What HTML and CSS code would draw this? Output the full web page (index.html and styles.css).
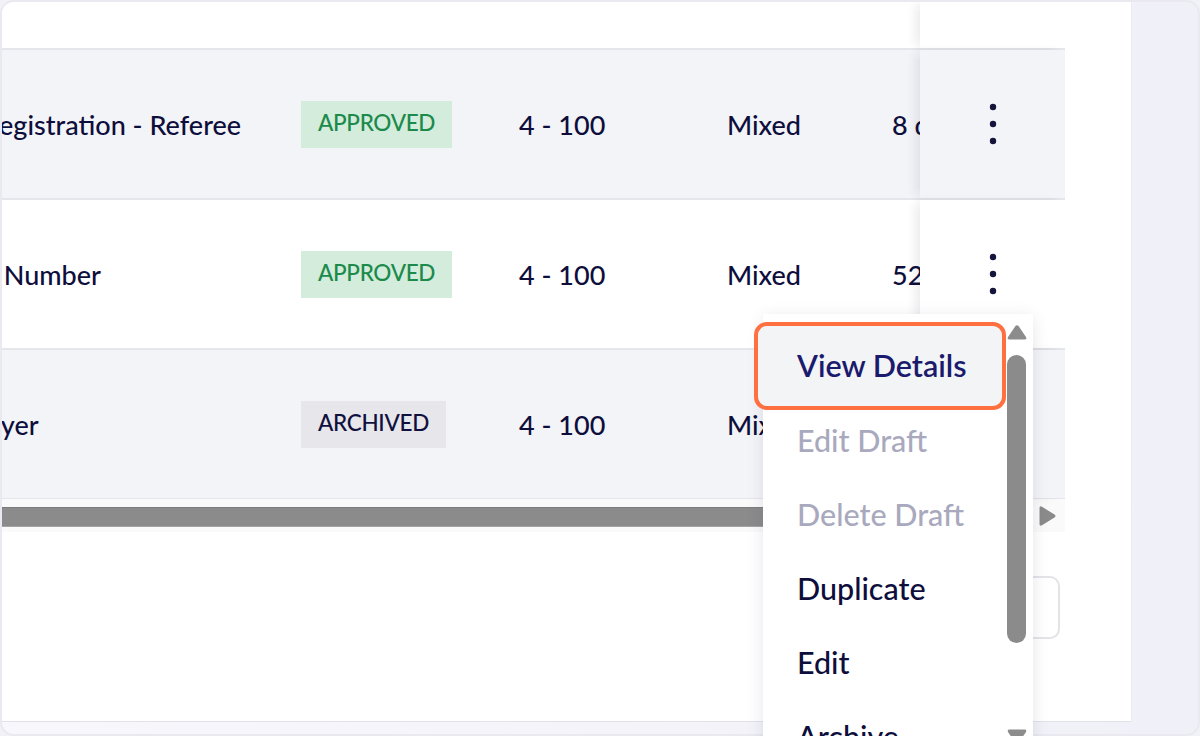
FILE: index.html
```html
<!DOCTYPE html>
<html lang="en">
<head>
<meta charset="utf-8">
<title>Forms</title>
<link rel="stylesheet" href="styles.css">
</head>
<body>
<div class="frame">
  <div class="card">
    <div class="table">
      <div class="row head">
        <div class="cells"></div>
        <div class="actions"></div>
      </div>
      <div class="row alt">
        <div class="cells">
          <div class="cell name">Player Registration - Referee</div>
          <div class="cell status"><span class="badge approved">APPROVED</span></div>
          <div class="cell range">4 - 100</div>
          <div class="cell type">Mixed</div>
          <div class="cell updated">8 days ago</div>
        </div>
        <div class="actions">
          <svg class="kebab" width="8" height="42" viewBox="0 0 8 42"><circle cx="4" cy="4" r="3.2"/><circle cx="4" cy="21" r="3.2"/><circle cx="4" cy="38" r="3.2"/></svg>
        </div>
      </div>
      <div class="row">
        <div class="cells">
          <div class="cell name">Contact Number</div>
          <div class="cell status"><span class="badge approved">APPROVED</span></div>
          <div class="cell range">4 - 100</div>
          <div class="cell type">Mixed</div>
          <div class="cell updated">52 days ago</div>
        </div>
        <div class="actions">
          <svg class="kebab" width="8" height="42" viewBox="0 0 8 42"><circle cx="4" cy="4" r="3.2"/><circle cx="4" cy="21" r="3.2"/><circle cx="4" cy="38" r="3.2"/></svg>
        </div>
      </div>
      <div class="row alt">
        <div class="cells">
          <div class="cell name">New Player</div>
          <div class="cell status"><span class="badge archived">ARCHIVED</span></div>
          <div class="cell range">4 - 100</div>
          <div class="cell type">Mixed</div>
          <div class="cell updated">60 days ago</div>
        </div>
        <div class="actions">
          <svg class="kebab" width="8" height="42" viewBox="0 0 8 42"><circle cx="4" cy="4" r="3.2"/><circle cx="4" cy="21" r="3.2"/><circle cx="4" cy="38" r="3.2"/></svg>
        </div>
      </div>
      <div class="hscroll">
        <div class="hthumb"></div>
        <svg class="harrow" width="20" height="22" viewBox="0 0 20 22"><path d="M2.5 3 Q2.5 0.5 5 1.8 L17.5 9.6 Q19.5 11 17.5 12.4 L5 20.2 Q2.5 21.5 2.5 19 Z"/></svg>
      </div>
    </div>
    <div class="pager">
      <div class="page-size">10 / page</div>
    </div>
  </div>
  <div class="side"></div>
</div>

<div class="menu">
  <ul class="menu-items">
    <li class="item current">View Details</li>
    <li class="item disabled">Edit Draft</li>
    <li class="item disabled">Delete Draft</li>
    <li class="item">Duplicate</li>
    <li class="item">Edit</li>
    <li class="item">Archive</li>
  </ul>
  <div class="menu-scroll">
    <svg class="varrow" width="20" height="15" viewBox="0 0 20 15"><path d="M8.3 1.2 Q10 -0.6 11.7 1.2 L19 12 Q20 14.5 17.5 14.5 L2.5 14.5 Q0 14.5 1 12 Z"/></svg>
    <div class="vthumb"></div>
    <svg class="varrow down" width="20" height="15" viewBox="0 0 20 15"><path d="M8.3 13.8 Q10 15.6 11.7 13.8 L19 3 Q20 0.5 17.5 0.5 L2.5 0.5 Q0 0.5 1 3 Z"/></svg>
  </div>
</div>
</body>
</html>
```

FILE: styles.css
```css
* { box-sizing: border-box; }

html, body {
  margin: 0;
  padding: 0;
  width: 1200px;
  height: 736px;
  overflow: hidden;
  background: #f1f1f7;
  font-family: Lato, "Noto Sans", sans-serif;
  color: #0e0e3c;
}

.frame {
  width: 1200px;
  height: 736px;
  border: 2px solid #e9e9ef;
  border-radius: 14px;
  overflow: hidden;
  display: flex;
  align-items: flex-start;
  background: linear-gradient(90deg, #f7f7fc 0%, #f3f3f9 60%, #f0f0f8 100%);
}

.card {
  width: 1130px;
  height: 720px;
  flex: none;
  background: #ffffff;
  border-bottom: 1px solid #e2e2ea;
  border-right: 1px solid #ebebf2;
  padding-right: 67px;
}

.side { flex: 1; }

.table {
  width: 1063px;
}

.row {
  display: flex;
  height: 150px;
  border-top: 2px solid #e5e6eb;
  background: #ffffff;
}

.row.head {
  height: 46px;
  border-top: none;
}

.row.alt { background: #f3f4f7; }

.cells {
  flex: 1;
  min-width: 0;
  overflow: hidden;
  display: flex;
  align-items: center;
  font-size: 27px;
  font-weight: 500;
  white-space: nowrap;
}

.cell { flex: none; }
.cell.name { width: 398px; margin-left: -99px; }
.cell.status { width: 218px; }
.cell.range { width: 208px; }
.cell.type { width: 165px; }
.cell.updated { width: 200px; }

.badge {
  display: inline-flex;
  align-items: center;
  height: 47px;
  padding: 0 17px 3px;
  font-size: 22.5px;
  font-weight: 500;
  letter-spacing: -0.3px;
}

.badge.approved { background: #d3ecdc; color: #1b8a4a; }
.badge.archived { background: #e6e6eb; color: #10103e; }

.actions {
  position: relative;
  z-index: 1;
  flex: none;
  width: 145px;
  display: flex;
  align-items: center;
  justify-content: center;
  background: inherit;
  box-shadow: -7px 0 10px -3px rgba(20, 20, 50, 0.09);
}

.kebab { fill: #14143c; }

.hscroll {
  height: 34px;
  border-top: 1px solid #e5e6eb;
  background: #fafafb;
  display: flex;
  align-items: center;
  justify-content: space-between;
  padding-right: 8px;
}

.hthumb {
  width: 820px;
  height: 20px;
  margin-top: 2px;
  background: #8b8b8b;
  border-top: 1px solid #7d7d7d;
  border-bottom: 1px solid #a4a4a4;
}

.harrow { fill: #8b8b8b; margin-top: 1px; }

.pager {
  width: 1063px;
  margin-top: 44px;
  display: flex;
  justify-content: flex-end;
  padding-right: 5px;
}

.page-size {
  width: 140px;
  height: 63px;
  border: 2px solid #e3e3e8;
  border-radius: 10px;
  background: #ffffff;
  display: flex;
  align-items: center;
  padding-left: 16px;
  font-size: 20px;
  color: #10103e;
}

/* dropdown overlay */
.menu {
  position: absolute;
  left: 763px;
  top: 314px;
  width: 270px;
  height: 460px;
  background: #ffffff;
  box-shadow: 0 3px 16px rgba(20, 20, 60, 0.10);
  display: flex;
  z-index: 5;
}

.menu-items {
  list-style: none;
  margin: 0;
  padding: 15px 0 0;
  flex: 1;
  min-width: 0;
}

.item {
  height: 74px;
  display: flex;
  align-items: center;
  padding-left: 34px;
  font-size: 30.5px;
  font-weight: 500;
  color: #0e0e3c;
  white-space: nowrap;
}

.item.disabled { color: #a9a9be; }

.item.current {
  height: 88px;
  margin: -7px 0 -7px -9px;
  padding-left: 39px;
  padding-bottom: 2px;
  border: 4px solid #ff7040;
  border-radius: 13px;
  background: #f3f4f6;
  color: #1b1b6e;
  font-weight: 600;
  position: relative;
  z-index: 1;
}

.menu-scroll {
  width: 27px;
  flex: none;
  display: flex;
  flex-direction: column;
  align-items: center;
  padding-top: 11px;
  padding-right: 6px;
}

.varrow { fill: #8c8c8c; flex: none; }

.vthumb {
  width: 19px;
  height: 288px;
  margin-top: 15px;
  border-radius: 10px;
  background: #8b8b8b;
  flex: none;
}

.varrow.down { margin-top: 86px; }
```
